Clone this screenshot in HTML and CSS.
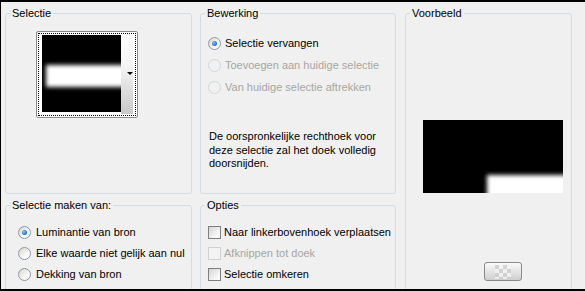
FILE: index.html
```html
<!DOCTYPE html>
<html lang="nl">
<head>
  <meta charset="UTF-8" />
  <title>Selectie uit masker</title>
  <link rel="stylesheet" href="styles.css">
</head>
<body>
  <div class="dialog">
    <fieldset class="group group-source">
      <legend>Selectie</legend>
      <div class="thumb">
        <div class="thumb-inner">
          <div class="thumb-image"><div class="thumb-band"></div></div>
          <div class="thumb-drop"><span class="arrow"></span></div>
        </div>
      </div>
    </fieldset>

    <fieldset class="group group-mode">
      <legend>Bewerking</legend>
      <div class="group-body">
        <div class="option"><span class="radio checked"></span>Selectie vervangen</div>
        <div class="option disabled"><span class="radio"></span>Toevoegen aan huidige selectie</div>
        <div class="option disabled"><span class="radio"></span>Van huidige selectie aftrekken</div>
      </div>
      <p class="note">De oorspronkelijke rechthoek voor<br>deze selectie zal het doek volledig<br>doorsnijden.</p>
    </fieldset>

    <fieldset class="group group-preview">
      <legend>Voorbeeld</legend>
      <div class="preview"><div class="preview-fill"></div></div>
      <div class="bg-button"><span class="checker"></span></div>
    </fieldset>

    <fieldset class="group group-from">
      <legend>Selectie maken van:</legend>
      <div class="group-body">
        <div class="option"><span class="radio checked"></span>Luminantie van bron</div>
        <div class="option"><span class="radio"></span>Elke waarde niet gelijk aan nul</div>
        <div class="option"><span class="radio"></span>Dekking van bron</div>
      </div>
    </fieldset>

    <fieldset class="group group-options">
      <legend>Opties</legend>
      <div class="group-body">
        <div class="option"><span class="check"></span>Naar linkerbovenhoek verplaatsen</div>
        <div class="option disabled"><span class="check"></span>Afknippen tot doek</div>
        <div class="option"><span class="check"></span>Selectie omkeren</div>
      </div>
    </fieldset>
  </div>
</body>
</html>
```

FILE: styles.css
```css
* {
  box-sizing: border-box;
}

body {
  margin: 0;
  padding: 2px 0 2px 1px;
  background: #000;
  font-family: "Liberation Sans", Arial, sans-serif;
  font-size: 11px;
  color: #000;
}

.dialog {
  width: 584px;
  height: 287px;
  overflow: hidden;
  background: #f0f0f0;
  padding: 5px 0 0 4px;
  display: grid;
  grid-template-columns: 187px 196px 168px;
  grid-template-rows: 187px 100px;
  column-gap: 8px;
  row-gap: 5px;
}

.group {
  margin: 0;
  padding: 0;
  min-width: 0;
  border: 1px solid #d3dde5;
  border-radius: 3px;
}

.group legend {
  margin-left: 4px;
  padding: 0 2px;
  line-height: 13px;
}

.group-source { grid-column: 1; grid-row: 1; }
.group-mode { grid-column: 2; grid-row: 1; }
.group-preview { grid-column: 3; grid-row: 1 / 3; margin-left: 1px; }
.group-from { grid-column: 1; grid-row: 2; }
.group-options { grid-column: 2; grid-row: 2; }

.group-body {
  display: flex;
  flex-direction: column;
}

.option {
  display: flex;
  align-items: center;
  height: 13px;
  line-height: 13px;
  white-space: nowrap;
}

.option.disabled {
  color: #a7a6a0;
}

/* radio buttons */
.radio {
  flex: none;
  width: 13px;
  height: 13px;
  margin-right: 4px;
  border-radius: 50%;
  border: 1px solid #8c98a3;
  background: linear-gradient(135deg, #d6d6d0, #fbfbfb 70%);
  display: flex;
  align-items: center;
  justify-content: center;
}

.radio.checked::after {
  content: "";
  width: 5px;
  height: 5px;
  border-radius: 50%;
  background: radial-gradient(circle at 35% 35%, #7cc4ff, #1f6ec8 70%, #0d4c96);
}

.disabled .radio {
  border-color: #d2d6d9;
  background: #f1f1f1;
}

/* checkboxes */
.check {
  flex: none;
  width: 13px;
  height: 13px;
  margin-right: 3px;
  border: 1px solid #7d7f80;
  background: linear-gradient(135deg, #d4d4cf, #f8f8f8 75%);
}

.disabled .check {
  border-color: #cfd1d3;
  background: #f3f3f3;
}

/* Selectie */
.thumb {
  width: 102px;
  height: 87px;
  margin: 11px 0 0 30px;
  padding: 1px;
  border: 1px solid #8a8a8a;
  border-radius: 2px;
  background: #fff;
}

.thumb-inner {
  height: 100%;
  border: 1px dotted #000;
  padding: 1px 0 1px 3px;
  display: flex;
}

.thumb-image {
  width: 79px;
  height: 77px;
  background: #000;
  overflow: hidden;
  padding-top: 30px;
}

.thumb-band {
  width: 90px;
  height: 22px;
  margin-left: 4px;
  background: #fff;
  filter: blur(2px);
}

.thumb-drop {
  width: 12px;
  background: linear-gradient(#fdfdfd, #f4f4f4 40%, #c8c8c8);
  padding-top: 37px;
  display: flex;
  justify-content: flex-end;
}

.arrow {
  width: 0;
  height: 0;
  border-left: 3px solid transparent;
  border-right: 3px solid transparent;
  border-top: 3px solid #000;
}

/* Bewerking */
.group-mode .group-body {
  padding: 17px 0 0 7px;
  gap: 9px;
}

.note {
  margin: 36px 0 0 8px;
  line-height: 13.5px;
}

/* Selectie maken van */
.group-from .group-body {
  padding: 14px 0 0 12px;
  gap: 8px;
}

.group-from .radio {
  margin-right: 5px;
}

/* Opties */
.group-options .group-body {
  padding: 14px 0 0 7px;
  gap: 8px;
}

/* Voorbeeld */
.preview {
  width: 140px;
  height: 73px;
  margin: 100px 0 0 17px;
  background: #000;
  overflow: hidden;
  padding: 55px 0 0 64px;
}

.preview-fill {
  width: 100px;
  height: 40px;
  background: #fff;
  filter: blur(2px);
}

.bg-button {
  width: 38px;
  height: 19px;
  margin: 69px 0 0 78px;
  border: 1px solid #8a8a8a;
  border-radius: 3px;
  background: linear-gradient(#fbfbfb, #e4e4e4 50%, #cfcfcf);
  display: flex;
  justify-content: center;
  align-items: center;
}

.checker {
  width: 16px;
  height: 14px;
  background: repeating-conic-gradient(#f4f4f4 0 25%, #cdcdcd 0 50%) 0 0 / 8px 8px;
  opacity: 0.8;
}
```
